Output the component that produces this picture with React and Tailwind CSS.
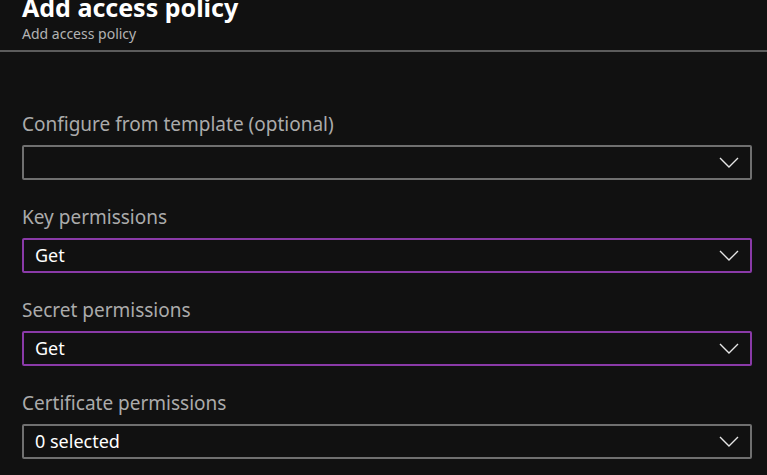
import React from 'react';

const Chevron = () => (
  <svg width="20" height="11" viewBox="0 0 20 11" fill="none" className="shrink-0">
    <path d="M1 1 L10 10 L19 1" stroke="#e6e6e6" strokeWidth="1.4" />
  </svg>
);

const Field = ({ label, value, active }) => (
  <div className="flex flex-col">
    <label className="text-[19px] leading-[24px] text-[#ababab] h-[24px]">{label}</label>
    <div
      className={
        'mt-[9px] h-[35px] flex items-center justify-between pl-[11px] pr-[11px] rounded-[2px] border-2 ' +
        (active ? 'border-[#8a3aa8]' : 'border-[#707070]')
      }
    >
      <span className="text-[18px] text-white">{value}</span>
      <Chevron />
    </div>
  </div>
);

export default function App() {
  return (
    <div className="w-[767px] h-[475px] overflow-hidden bg-[#111111]" style={{ fontFamily: '"Noto Sans", sans-serif' }}>
      <div className="px-[22px] h-[52px] flex flex-col border-b-2 border-[#5c5c5c]">
        <h1 className="text-[25px] font-bold leading-[26px] text-white mt-[-6px]">Add access policy</h1>
        <p className="text-[14px] leading-[16px] text-[#b3b3b3] mt-[6px]">Add access policy</p>
      </div>
      <div className="pl-[22px] pr-[15px] pt-[60px] flex flex-col gap-[25px]">
        <Field label="Configure from template (optional)" value="" />
        <Field label="Key permissions" value="Get" active />
        <Field label="Secret permissions" value="Get" active />
        <Field label="Certificate permissions" value="0 selected" />
      </div>
    </div>
  );
}
